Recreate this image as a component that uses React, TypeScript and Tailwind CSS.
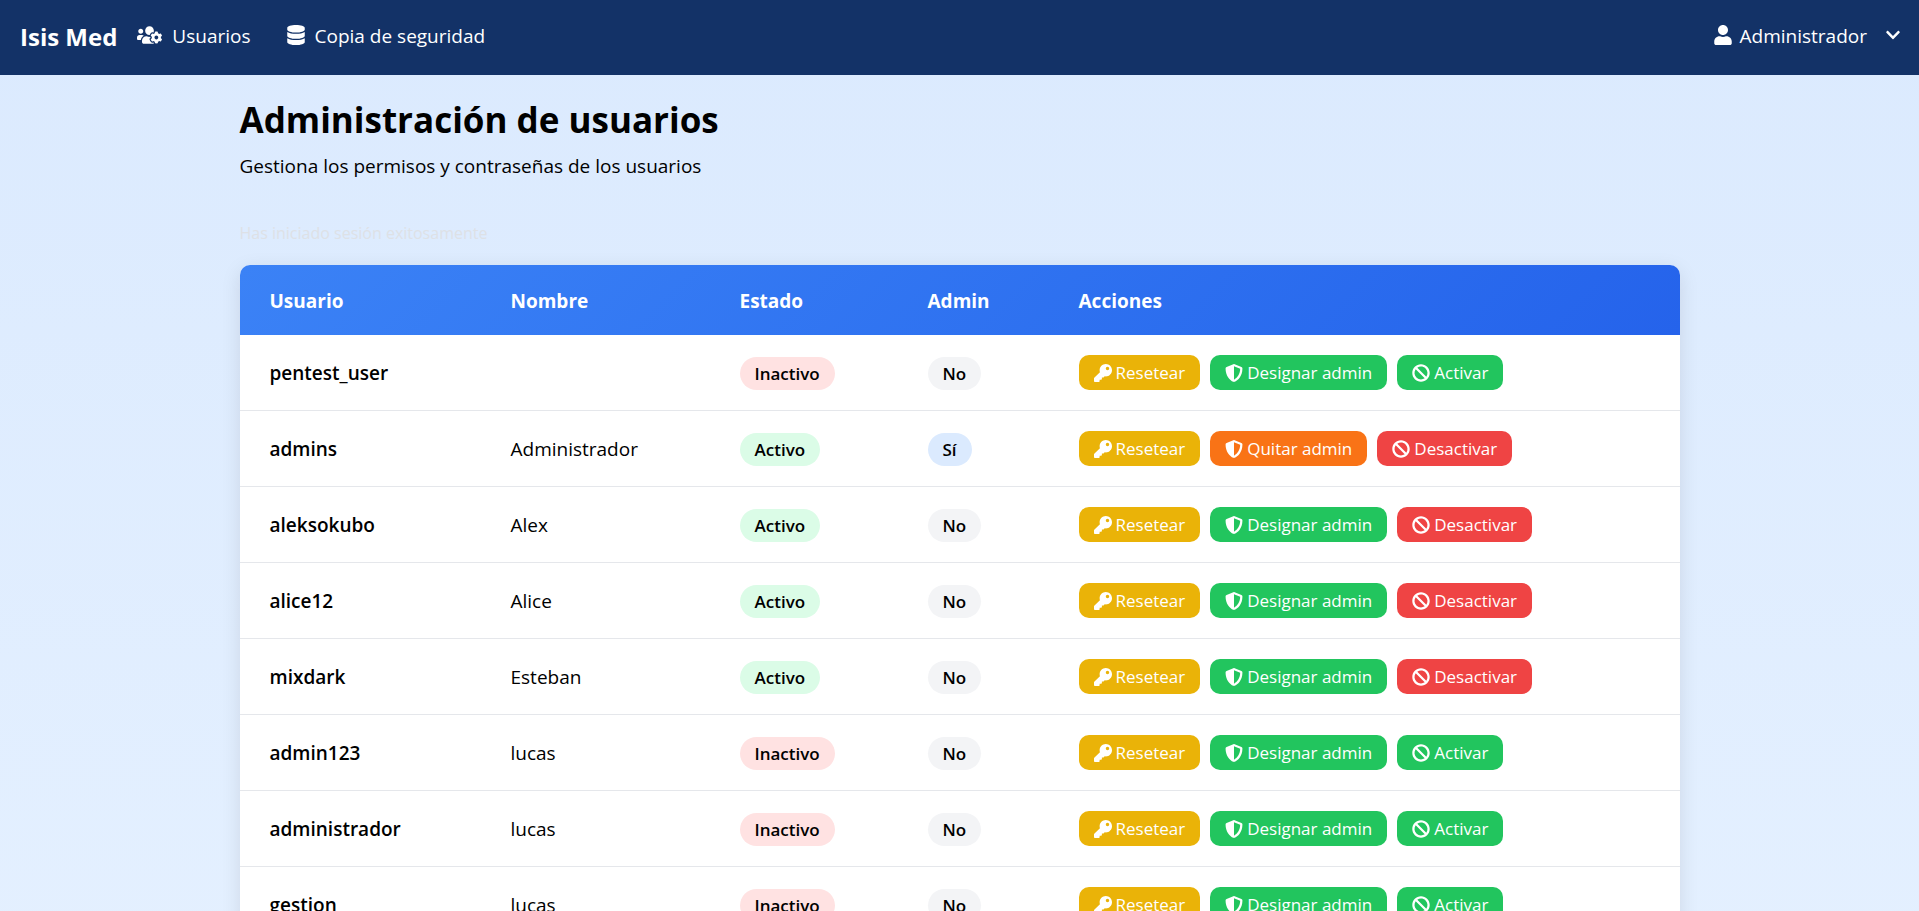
import { ReactNode } from 'react';
import {
  FaBan,
  FaChevronDown,
  FaDatabase,
  FaKey,
  FaShieldAlt,
  FaUser,
  FaUsersCog,
} from 'react-icons/fa';

interface User {
  username: string;
  name: string;
  active: boolean;
  admin: boolean;
}

const users: User[] = [
  { username: 'pentest_user', name: '', active: false, admin: false },
  { username: 'admins', name: 'Administrador', active: true, admin: true },
  { username: 'aleksokubo', name: 'Alex', active: true, admin: false },
  { username: 'alice12', name: 'Alice', active: true, admin: false },
  { username: 'mixdark', name: 'Esteban', active: true, admin: false },
  { username: 'admin123', name: 'lucas', active: false, admin: false },
  { username: 'administrador', name: 'lucas', active: false, admin: false },
  { username: 'gestion', name: 'lucas', active: false, admin: false },
];

function Navbar() {
  return (
    <nav className="flex h-[75px] items-center bg-[#133267] pr-[18px] pb-0.5 pl-5 text-[19px] text-white">
      <a href="#" className="text-2xl font-bold">
        Isis Med
      </a>
      <a href="#usuarios" className="ml-5 flex items-center gap-2.5">
        <FaUsersCog className="mb-1 h-5 w-[25px]" />
        Usuarios
      </a>
      <a href="#copia" className="ml-9 flex items-center gap-2.5">
        <FaDatabase className="mb-1 h-5 w-[18px]" />
        Copia de seguridad
      </a>
      <button type="button" className="ml-auto flex items-center">
        <FaUser className="mr-2 mb-1 h-5 w-[18px]" />
        Administrador
        <FaChevronDown className="mb-1 ml-[18px] size-4" />
      </button>
    </nav>
  );
}

function Badge({ className, children }: { className: string; children: ReactNode }) {
  return (
    <span className={`inline-block rounded-full px-[15px] text-[17px] leading-[33px] font-semibold ${className}`}>
      {children}
    </span>
  );
}

interface ActionButtonProps {
  icon: ReactNode;
  className: string;
  children: ReactNode;
}

function ActionButton({ icon, className, children }: ActionButtonProps) {
  return (
    <button
      type="button"
      className={`flex h-[35px] items-center gap-1 rounded-[10px] px-[15px] text-[17px] font-medium text-white ${className}`}
    >
      {icon}
      {children}
    </button>
  );
}

function UserRow({ user }: { user: User }) {
  return (
    <tr className="h-[76px]">
      <td className="border-b border-gray-200 px-[30px] pt-0.5 font-semibold">{user.username}</td>
      <td className="border-b border-gray-200 px-[30px] pt-0.5">{user.name}</td>
      <td className="border-b border-gray-200 px-[30px] pt-0.5">
        <Badge className={user.active ? 'bg-green-100' : 'bg-red-100'}>
          {user.active ? 'Activo' : 'Inactivo'}
        </Badge>
      </td>
      <td className="border-b border-gray-200 px-[30px] pt-0.5">
        <Badge className={user.admin ? 'bg-blue-100' : 'bg-gray-100'}>
          {user.admin ? 'Sí' : 'No'}
        </Badge>
      </td>
      <td className="border-b border-gray-200 px-[30px]">
        <div className="flex gap-2.5">
          <ActionButton icon={<FaKey className="size-[18px]" />} className="bg-[#eab308]">
            Resetear
          </ActionButton>
          <ActionButton
            icon={<FaShieldAlt className="size-[18px]" />}
            className={user.admin ? 'bg-[#f97316]' : 'bg-[#22c55e]'}
          >
            {user.admin ? 'Quitar admin' : 'Designar admin'}
          </ActionButton>
          <ActionButton
            icon={<FaBan className="size-[18px]" />}
            className={user.active ? 'bg-[#ef4444]' : 'bg-[#22c55e]'}
          >
            {user.active ? 'Desactivar' : 'Activar'}
          </ActionButton>
        </div>
      </td>
    </tr>
  );
}

export default function App() {
  return (
    <div className="min-h-screen bg-linear-to-b from-[#dbeafe] to-[#e4f0ff] font-['Open_Sans','Noto_Sans',sans-serif] text-black">
      <Navbar />
      <main className="mx-auto max-w-[1440px] pt-5 pb-10">
        <h1 className="text-[35px] leading-[50px] font-bold">Administración de usuarios</h1>
        <p className="mt-1.5 text-[19px] leading-[30px]">
          Gestiona los permisos y contraseñas de los usuarios
        </p>
        <p className="mt-10 text-base text-[#dde1e6]">Has iniciado sesión exitosamente</p>
        <div className="mt-5 overflow-hidden rounded-[10px] bg-white shadow-[0_5px_20px_rgba(0,0,0,0.1)]">
          <table className="w-full table-fixed border-separate border-spacing-0 text-left text-[19px]">
            <colgroup>
              <col className="w-[241px]" />
              <col className="w-[229px]" />
              <col className="w-[188px]" />
              <col className="w-[151px]" />
              <col />
            </colgroup>
            <thead className="bg-linear-135 from-[#3b82f6] to-[#2563eb] text-white">
              <tr className="h-[70px]">
                <th className="px-[30px] pt-0.5 font-bold">Usuario</th>
                <th className="px-[30px] pt-0.5 font-bold">Nombre</th>
                <th className="px-[30px] pt-0.5 font-bold">Estado</th>
                <th className="px-[30px] pt-0.5 font-bold">Admin</th>
                <th className="px-[30px] pt-0.5 font-bold">Acciones</th>
              </tr>
            </thead>
            <tbody>
              {users.map((user) => (
                <UserRow key={user.username} user={user} />
              ))}
            </tbody>
          </table>
        </div>
      </main>
    </div>
  );
}
